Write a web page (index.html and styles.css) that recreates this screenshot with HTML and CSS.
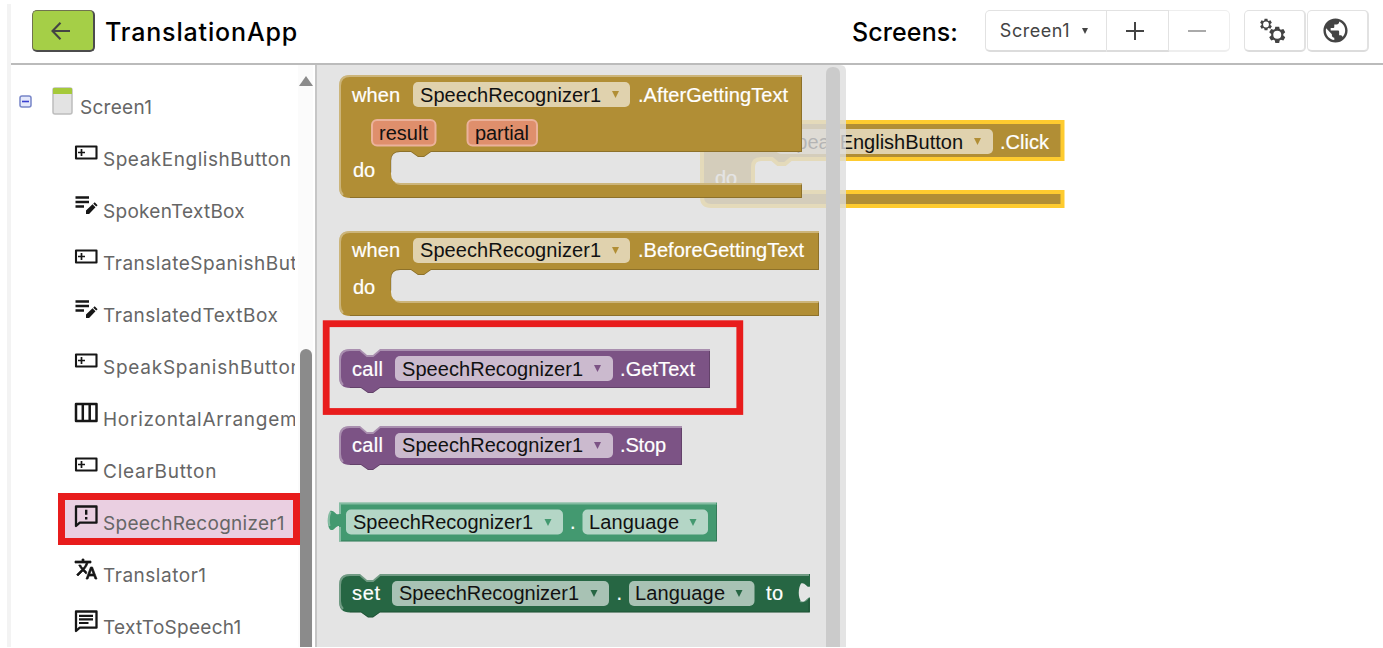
FILE: index.html
```html
<!DOCTYPE html>
<html lang="en">
<head>
<meta charset="utf-8">
<title>TranslationApp</title>
<link rel="stylesheet" href="styles.css">
</head>
<body>
<svg width="0" height="0" class="defs">
  <defs>
    <symbol id="i-button" viewBox="0 0 24 24"><path d="M2 5.500h20.500v12H2z" fill="none" stroke="#161616" stroke-width="2.100" stroke-linejoin="round"/><path d="M7.500 8v7M4 11.500h7" stroke="#161616" stroke-width="1.700"/></symbol>
    <symbol id="i-textbox" viewBox="0 0 24 24"><path d="M1.500 4.600h13.500M1.500 9.100h13.500M1.500 13.600h8.500" stroke="#161616" stroke-width="2.500"/><path d="M12 21v-3.500l6.500-6.200 3 3-6.400 6.700zM19.200 10.700l1.500-1.400 2.900 2.900-1.400 1.400z" fill="#161616"/></symbol>
    <symbol id="i-cols" viewBox="0 0 24 24"><path d="M2 3h20.500v17H2zM8.800 3v17M15.700 3v17" fill="none" stroke="#161616" stroke-width="2.500" stroke-linejoin="round"/></symbol>
    <symbol id="i-recog" viewBox="0 0 24 24"><path d="M2 22V2.500h20.500v16.200H5.800z" fill="none" stroke="#161616" stroke-width="2.300" stroke-linejoin="round"/><path d="M12.200 5.800v5M12.200 13v2.500" stroke="#161616" stroke-width="2.400"/></symbol>
    <symbol id="i-trans" viewBox="0 0 24 24"><path d="M12.870 15.070l-2.540-2.510.030-.030A17.500 17.500 0 0 0 14.070 6H17V4h-7V2H8v2H1v2h11.170C11.500 7.920 10.440 9.750 9 11.350 8.070 10.320 7.300 9.190 6.690 8h-2c.730 1.630 1.730 3.170 2.980 4.560l-5.090 5.020L4 19l5-5 3.110 3.110.760-2.040zM18.500 10h-2L12 22h2l1.120-3h4.750L21 22h2l-4.500-12zm-2.620 7l1.620-4.330L19.120 17h-3.240z" fill="#161616" stroke="#161616" stroke-width=".7"/></symbol>
    <symbol id="i-tts" viewBox="0 0 24 24"><path d="M2 22V2.500h20.500v16.200H5.800z" fill="none" stroke="#161616" stroke-width="2.300" stroke-linejoin="round"/><path d="M5 6.800h14M5 10.400h14M5 14h9.500" stroke="#161616" stroke-width="2.200"/></symbol>
    <symbol id="i-gear" viewBox="0 0 24 24"><path fill-rule="evenodd" d="M9.200 0h5.600l.7 3.800 1.800 1 3.600-1.300 2.800 4.800-2.900 2.500v2.400l2.900 2.500-2.800 4.800-3.600-1.300-1.800 1-.7 3.800H9.200l-.7-3.800-1.800-1-3.600 1.300-2.800-4.800 2.900-2.500v-2.400L.3 8.300l2.800-4.800 3.600 1.300 1.800-1zM12 6.200a5.800 5.800 0 1 0 0 11.600 5.800 5.800 0 0 0 0-11.600z" fill="#444"/></symbol>
  </defs>
</svg>
<div class="app">
  <header class="topbar">
    <button class="back"><svg width="20" height="20" viewBox="0 0 20 20"><path d="M19 10H2M9.500 1.700L1.500 10l8 8.300" fill="none" stroke="#444" stroke-width="2.100"/></svg></button>
    <h1 class="project">TranslationApp</h1>
    <span class="screens-label">Screens:</span>
    <div class="group">
      <button class="btn btn-screen"><span>Screen1</span><i class="caret"></i></button>
      <button class="btn btn-add"><svg width="18" height="18"><path d="M9 0v18M0 9h18" stroke="#444" stroke-width="2"/></svg></button>
      <button class="btn btn-remove"><svg width="18" height="18"><path d="M0 9h18" stroke="#aaa" stroke-width="2"/></svg></button>
    </div>
    <div class="tools">
      <button class="btn tool"><svg width="28" height="28"><use href="#i-gear" x="1" y="1.500" width="12" height="12"/><use href="#i-gear" x="10" y="9.500" width="16.500" height="16.500"/></svg></button>
      <button class="btn tool"><svg width="29" height="29" viewBox="0 0 24 24"><path fill="#444" d="M12 2C6.480 2 2 6.480 2 12s4.480 10 10 10 10-4.480 10-10S17.520 2 12 2zm-1 17.930c-3.950-.490-7-3.850-7-7.930 0-.620.080-1.210.210-1.790L9 15v1c0 1.100.9 2 2 2v1.930zm6.900-2.540c-.260-.810-1-1.390-1.900-1.390h-1v-3c0-.550-.450-1-1-1H8v-2h2c.550 0 1-.450 1-1V7h2c1.100 0 2-.9 2-2v-.410c2.930 1.190 5 4.060 5 7.410 0 2.080-.8 3.970-2.100 5.390z"/></svg></button>
    </div>
  </header>
  <main class="content">
    <nav class="sidebar">
      <div class="tree">
        <div class="row root">
          <svg class="minus" width="13" height="13"><rect x="1" y="1" width="11" height="11" rx="2" fill="#e4e8fb" stroke="#7785c8" stroke-width="1.500"/><path d="M3 6.500h7" stroke="#3a3fd0" stroke-width="1.600"/></svg>
          <svg class="phone" width="21" height="28"><rect x="1" y="1" width="19" height="26" rx="2" fill="#e3e3e3" stroke="#bdbdbd" stroke-width="1.500"/><path d="M1 2q0-1 1-1h17q1 0 1 1v5H1z" fill="#a5c93a"/></svg>
          <span>Screen1</span>
        </div>
        <div class="row"><svg class="icon"><use href="#i-button"/></svg><span class="wide">SpeakEnglishButton</span></div>
        <div class="row"><svg class="icon"><use href="#i-textbox"/></svg><span>SpokenTextBox</span></div>
        <div class="row"><svg class="icon"><use href="#i-button"/></svg><span class="wide">TranslateSpanishButton</span></div>
        <div class="row"><svg class="icon"><use href="#i-textbox"/></svg><span class="wide">TranslatedTextBox</span></div>
        <div class="row"><svg class="icon"><use href="#i-button"/></svg><span class="wider">SpeakSpanishButton</span></div>
        <div class="row"><svg class="icon"><use href="#i-cols"/></svg><span class="wider">HorizontalArrangement1</span></div>
        <div class="row"><svg class="icon"><use href="#i-button"/></svg><span class="wider">ClearButton</span></div>
        <div class="row selected"><svg class="icon"><use href="#i-recog"/></svg><span>SpeechRecognizer1</span></div>
        <div class="row"><svg class="icon"><use href="#i-trans"/></svg><span class="wide">Translator1</span></div>
        <div class="row"><svg class="icon"><use href="#i-tts"/></svg><span>TextToSpeech1</span></div>
      </div>
      <div class="scrollbar"><i class="up"></i><i class="thumb"></i></div>
    </nav>
    <svg class="workspace" width="1066" height="582" viewBox="317 65 1066 582">
      <!-- workspace block -->
      <path class="event glow" d="M1062.500 122H711q-9 0-9 9v66q0 9 9 9h351.500v-14H761q-8 0-8-8v-17q0-8 8-8h11l6 5h7l6-5h271.500z"/>
      <text class="t light" x="715" y="148.500" textLength="48">when</text>
      <rect class="field event-f" x="776" y="129" width="217" height="25" rx="5"/>
      <text class="t" x="783" y="148.500" textLength="180">SpeakEnglishButton</text>
      <path class="event" d="M974 138h7l-3.500 7z"/>
      <text class="t light" x="1000" y="148.500" textLength="49">.Click</text>
      <text class="t light" x="715" y="185" textLength="22">do</text>

      <!-- flyout -->
      <path class="flyout" d="M317 65h523q6 0 6 6v576H317z"/>
      <path d="M826 647V74q0-7 7-7t7 7v573z" fill="#cbcbcb"/>

      <path class="event" d="M802 75H350q-11 0-11 11v101q0 11 11 11h452v-15H400q-9 0-9-9v-13q0-9 9-9h11l7 5h6l7-5h371z"/>
      <path class="edge" d="M802 76H350q-10 0-10 10v101q0 5 3 8M395 182q3 2 6 2h401"/>
      <path class="shade" d="M801.500 77v74.500H431l-7 5h-6l-7-5h-11q-9 0-9 9v12M801.500 184v13.500H350"/>
      <text class="t light" x="352" y="101.500" textLength="48">when</text>
      <rect class="field event-f" x="413" y="82" width="217" height="25" rx="5"/>
      <text class="t" x="420" y="101.500" textLength="181">SpeechRecognizer1</text>
      <path class="event" d="M612 91h7l-3.500 7z"/>
      <text class="t light" x="638" y="101.500" textLength="150">.AfterGettingText</text>
      <rect class="param" x="372" y="120" width="63.500" height="25.500" rx="5"/>
      <text class="t" x="379" y="139.500" textLength="49">result</text>
      <rect class="param" x="467.500" y="120" width="69.500" height="25.500" rx="5"/>
      <text class="t" x="475" y="139.500" textLength="54">partial</text>
      <text class="t light" x="353" y="176.500" textLength="22">do</text>

      <path class="event" d="M819 231H350q-11 0-11 11v63q0 11 11 11h469v-15H400q-9 0-9-9v-13q0-9 9-9h11l7 5h6l7-5h388z"/>
      <path class="edge" d="M819 232H350q-10 0-10 10v63q0 5 3 8M395 300q3 2 6 2h418"/>
      <path class="shade" d="M818.500 233v36.500H431l-7 5h-6l-7-5h-11q-9 0-9 9v12M818.500 302v13.500H350"/>
      <text class="t light" x="352" y="257" textLength="48">when</text>
      <rect class="field event-f" x="413" y="238" width="217" height="25" rx="5"/>
      <text class="t" x="420" y="257" textLength="181">SpeechRecognizer1</text>
      <path class="event" d="M612 247h7l-3.500 7z"/>
      <text class="t light" x="638" y="257" textLength="166">.BeforeGettingText</text>
      <text class="t light" x="353" y="294" textLength="22">do</text>

      <g>
        <path class="call" d="M710 349H380l-7 6h-6l-7-6h-10q-11 0-11 11v17q0 11 11 11h11l7 5h5l7-5h330z"/>
        <path class="edge" d="M710 350H380l-7 6h-6l-7-6h-10q-10 0-10 10v17q0 5 3 8"/>
        <path class="shade" d="M709.500 351v36.500H380l-7 5h-5l-7-5h-11"/>
        <text class="t light" x="352" y="375.500" textLength="31">call</text>
        <rect class="field call-f" x="395" y="356" width="218" height="25" rx="5"/>
        <text class="t" x="402" y="375.500" textLength="181">SpeechRecognizer1</text>
        <path class="call" d="M594 365h7l-3.500 7z"/>
        <text class="t light" x="620" y="375.500" textLength="75">.GetText</text>
      </g>
      <rect x="326.200" y="323.700" width="413.600" height="87.800" fill="none" stroke="#e81c1c" stroke-width="6.800"/>

      <g>
        <path class="call" d="M682 426H380l-7 6h-6l-7-6h-10q-11 0-11 11v17q0 11 11 11h11l7 5h5l7-5h302z"/>
        <path class="edge" d="M682 427H380l-7 6h-6l-7-6h-10q-10 0-10 10v17q0 5 3 8"/>
        <path class="shade" d="M681.500 428v36.500H380l-7 5h-5l-7-5h-11"/>
        <text class="t light" x="352" y="452" textLength="31">call</text>
        <rect class="field call-f" x="395" y="433" width="218" height="25" rx="5"/>
        <text class="t" x="402" y="452" textLength="181">SpeechRecognizer1</text>
        <path class="call" d="M594 442h7l-3.500 7z"/>
        <text class="t light" x="620" y="452" textLength="46">.Stop</text>
      </g>

      <path class="get" d="M339 502.500h378v39H339v-15.500c-3-1-5 6-9 3.500-3-3-3-14 0-18.500 4-2 6 5 9 3z"/>
      <path class="edge" d="M340 541v-14M329.500 526c-1-5-1-10 1-14.500M340 514v-10.500h376"/>
      <path class="shade" d="M716.500 505v36H341"/>
      <rect class="field get-f" x="346" y="509.500" width="217" height="25" rx="5"/>
      <text class="t" x="353" y="528.500" textLength="180">SpeechRecognizer1</text>
      <path class="get" d="M544.500 519h7l-3.500 7z"/>
      <text class="t light" x="570" y="528.500">.</text>
      <rect class="field get-f" x="582.500" y="509.500" width="125.500" height="25" rx="5"/>
      <text class="t" x="589" y="528.500" textLength="90">Language</text>
      <path class="get" d="M689.500 519h7l-3.500 7z"/>

      <path class="set" d="M810 574H380l-7 6h-6l-7-6h-10q-11 0-11 11v16.500q0 11 11 11h11l7 5h5l7-5h430v-15c-3-1-5 6-9 3.500-3-3-3-13 0-17.500 4-2 6 5 9 3z"/>
      <path class="edge" d="M809 575H380l-7 6h-6l-7-6h-10q-10 0-10 10v16q0 5 3 8M800 601q5 1 8-3"/>
      <path class="shade" d="M809 599v13H380l-7 5h-5l-7-5h-11"/>
      <text class="t light" x="352" y="600" textLength="28">set</text>
      <rect class="field set-f" x="392" y="581" width="217" height="25" rx="5"/>
      <text class="t" x="399" y="600" textLength="180">SpeechRecognizer1</text>
      <path class="set" d="M590.500 590h7l-3.500 7z"/>
      <text class="t light" x="616.500" y="600">.</text>
      <rect class="field set-f" x="629" y="581" width="125.500" height="25" rx="5"/>
      <text class="t" x="635" y="600" textLength="90">Language</text>
      <path class="set" d="M735.500 590h7l-3.500 7z"/>
      <text class="t light" x="766" y="600" textLength="17">to</text>
    </svg>
  </main>
</div>
</body>
</html>
```
FILE: styles.css
```css
* { box-sizing: border-box; }
body { margin: 0; background: #fff; font-family: Inter, "Open Sans", sans-serif; width: 1383px; height: 648px; overflow: hidden; }
.defs { display: block; }
.app { margin: 4px 0 0 7px; height: 643px; border-left: 4px solid #f3f3f3; display: flex; flex-direction: column; }
.topbar { height: 61px; flex: none; display: flex; align-items: flex-start; padding: 6px 14px 0 21px; border-bottom: 2px solid #bbb; }
button { font: inherit; margin: 0; padding: 0; display: flex; align-items: center; justify-content: center; }
.back { width: 63px; height: 42px; background: #a5cf47; border: 1px solid #70734f; border-right: 2px solid #4c4c4c; border-bottom: 2px solid #4c4c4c; border-radius: 5px; padding-right: 5px; }
.project, .screens-label { font-size: 25px; line-height: 30px; font-weight: 500; color: #000; margin: 7px 0 0 10px; white-space: nowrap; }
.project { letter-spacing: .85px; }
.screens-label { margin-left: auto; width: 133px; letter-spacing: .1px; }
.group { display: flex; }
.btn { background: #fff; border: 1px solid #e2e2e2; border-bottom: 2px solid #dcdcdc; height: 42px; color: #444; }
.btn-screen { width: 122px; border-radius: 5px 0 0 5px; gap: 12px; font-size: 18px; letter-spacing: .55px; padding-right: 4px; }
.btn-add { width: 62px; border-left: 0; padding-right: 5px; }
.btn-remove { width: 61px; border-left: 0; border-color: #eee; border-radius: 0 5px 5px 0; padding-right: 5px; }
.caret { border: 3px solid transparent; border-top: 6px solid #444; border-bottom: 0; }
.tools { display: flex; gap: 1px; margin-left: 14px; }
.tool { width: 62px; border-radius: 5px; border-right-width: 2px; padding-right: 4px; }
.content { flex: 1; min-height: 0; display: flex; }
.sidebar { width: 306px; flex: none; display: flex; border-right: 2px solid #c6c6c6; overflow: hidden; }
.tree { width: 287px; flex: none; padding-top: 11px; display: flex; flex-direction: column; }
.row { height: 52.1px; flex: none; display: flex; align-items: flex-start; padding-left: 63px; color: #666; font-size: 19px; line-height: 24px; white-space: nowrap; overflow: hidden; width: 284px; }
.row span { margin: 19.5px 0 0 5px; letter-spacing: .28px; }
.row .wide { letter-spacing: .52px; }
.row .wider { letter-spacing: .75px; }
.icon { width: 24px; height: 24px; flex: none; margin-top: 12.500px; }
.root { padding-left: 8px; }
.root .minus { margin: 19px 20px 0 0; }
.root .phone { margin-top: 11px; }
.root span { margin-left: 7px; margin-top: 20px; }
.selected { width: 242px; margin-left: 47px; border: 7px solid #e81c1c; background: #eacfe1; padding-left: 9px; position: relative; z-index: 1; }
.selected .icon { margin-top: 4px; }
.selected span { margin-top: 12.500px; }
.scrollbar { width: 15px; display: flex; flex-direction: column; align-items: center; background: #fbfbfb; }
.up { border: 7px solid transparent; border-bottom: 10px solid #8b8b8b; border-top: 0; margin-top: 11px; }
.thumb { width: 12px; flex: 1; margin-top: 263px; border-radius: 6px 6px 0 0; background: #8b8b8b; }
.workspace { display: block; flex: none; }
.t { font: 20px "Liberation Sans", Arial, sans-serif; fill: #111; }
.light { fill: #fff; stroke: #fff; stroke-width: .2px; }
.event { fill: #b18e35; }
.call { fill: #7c5385; }
.get { fill: #439970; }
.set { fill: #266643; }
.glow { stroke: #fecb2f; stroke-width: 4px; }
.event-f { fill: #e0d2ae; }
.call-f { fill: #cbbace; }
.get-f { fill: #b4d6c6; }
.set-f { fill: #a8c2b4; }
.param { fill: #df8f6c; stroke: #ebb29b; stroke-width: 2px; }
.flyout { fill: #ddd; fill-opacity: .8; }
.edge { fill: none; stroke: #fff; stroke-opacity: .35; stroke-width: 2px; }
.shade { fill: none; stroke: #000; stroke-opacity: .2; stroke-width: 1px; }
```
